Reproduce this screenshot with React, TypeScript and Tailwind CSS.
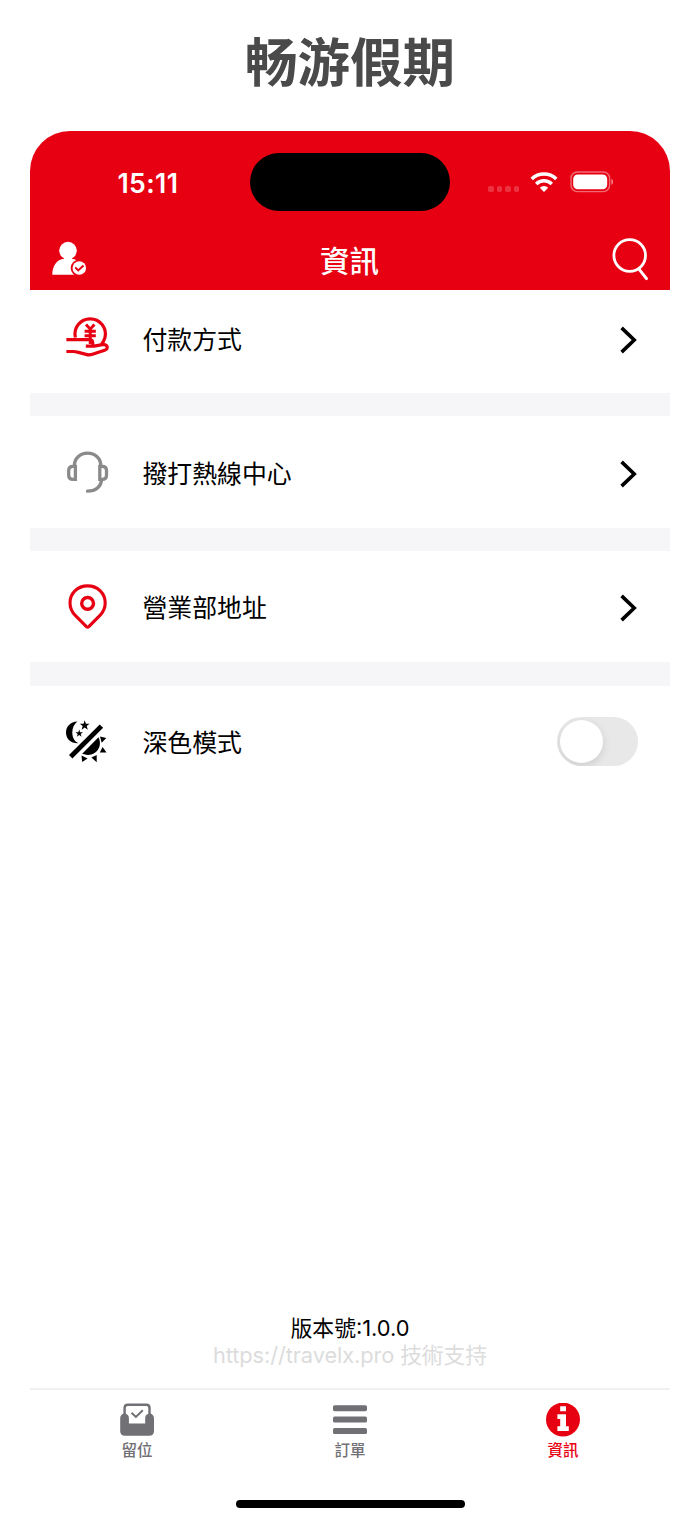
import React, { useState } from 'react';

interface MenuRowProps {
  icon: React.ReactNode;
  label: string;
  className?: string;
  children: React.ReactNode;
}

const PaymentIcon = () => (
  <svg viewBox="0 0 46 46" className="w-[46px] h-[46px]" fill="none" stroke="#e70012" strokeWidth="3.2">
    <path d="M11.4 22.5A15.2 15.2 0 1 1 41 22.4C40.3 25.3 39 27.6 37.4 29.6" />
    <path d="M2.4 24.7H25Q28.8 24.7 28.8 28.5V31.4" />
    <path d="M21.8 31.2H30L38.5 29.7C43.3 28.8 44.8 33.4 41.3 34.9L28.5 39.3Q25.3 40.4 22 39.4L13.5 37.1Q11.5 36.5 9 36.5H2.4" />
    <path d="M22 9.6L26.2 14.2L30.4 9.6M26.2 13.5V29M20.6 16.2H31.8M20.6 20.8H31.8" strokeWidth="2.9" />
  </svg>
);

const HeadsetIcon = () => (
  <svg viewBox="0 0 46 46" className="w-[46px] h-[46px]" fill="none" stroke="#8a8a8a" strokeWidth="3.3" strokeLinecap="round">
    <path d="M10.4 16.5C10.4 9.5 16 4.2 23.6 4.2C31.2 4.2 36.8 9.5 36.8 16.5" />
    <path d="M11.4 17.3H9Q4.7 17.3 4.7 21.5V26.3Q4.7 30.4 9 30.4H11.4Z" />
    <path d="M35.8 17.3H38.2Q42.5 17.3 42.5 21.5V26.3Q42.5 30.4 38.2 30.4H35.8Z" />
    <path d="M37.6 31.5C36.4 38 31.5 42 23.5 42.2" />
  </svg>
);

const PinIcon = () => (
  <svg viewBox="0 0 46 46" className="w-[46px] h-[46px]" fill="none" stroke="#e70012" strokeWidth="3.1" strokeLinejoin="round">
    <path d="M23.6 1.9C13.3 1.9 6 9.6 6 18.9C6 24.2 7.8 27.9 11.5 31.6L22.4 42.7Q23.6 43.8 24.8 42.7L35.7 31.6C39.4 27.9 41.2 24.2 41.2 18.9C41.2 9.6 33.9 1.9 23.6 1.9Z" />
    <circle cx="23.6" cy="19.4" r="5.9" strokeWidth="3.4" />
  </svg>
);

const DarkModeIcon = () => (
  <svg viewBox="0 0 46 46" className="w-[46px] h-[46px]" fill="#000">
    <path d="M13.4 2.6C6.3 3 2 7.8 2 13.5C2 20 6.8 24.4 14.2 24.2C10.4 22.4 8.3 18.6 8.3 13.6C8.3 9 10 5.2 13.4 2.6Z" />
    <path d="M20.7 1.3L21.9 4.8H25.6L22.7 7.1L23.8 10.8L20.7 8.6L17.6 10.8L18.7 7.1L15.8 4.8H19.5Z" />
    <path d="M15.2 10.5L16.1 13.2H19L16.7 14.9L17.6 17.8L15.2 16.1L12.8 17.8L13.7 14.9L11.4 13.2H14.3Z" />
    <path d="M37.4 7.1L6.7 37.8" stroke="#000" strokeWidth="4.8" />
    <path d="M34.5 18.3C39.5 28.5 30.5 39.5 18.2 34.8Z" />
    <path d="M36 17.6L42.3 18.9L37.7 23.8ZM38.6 28L42.5 33.4L35.8 33.4ZM27.4 38.6L32.7 36L32.7 43.3ZM17.5 36.4L23.6 39.5L18.2 43Z" />
  </svg>
);

const UserIcon = () => (
  <svg viewBox="0 0 36 36" className="w-[36px] h-[36px]">
    <circle cx="16" cy="9.6" r="8.8" fill="#fff" />
    <path d="M12 15H20V17.8C22 18 24 18.8 25.5 20L22.5 33.8H.3C.3 25 4.8 18.5 12 17.8Z" fill="#fff" />
    <circle cx="27.3" cy="27" r="8.6" fill="#e70012" />
    <circle cx="27.3" cy="27" r="6.8" fill="#fff" />
    <path d="M23.2 26.4L26.2 29.4L31.5 24.4" fill="none" stroke="#e70012" strokeWidth="2" />
  </svg>
);

const SearchIcon = () => (
  <svg viewBox="0 0 38 44" className="w-[38px] h-[44px]" fill="none" stroke="#fff" strokeLinecap="round">
    <circle cx="18.7" cy="18.5" r="15.8" strokeWidth="2.8" />
    <path d="M28.2 32.4L35.5 41.6" strokeWidth="3" />
  </svg>
);

const WifiIcon = () => (
  <svg viewBox="0 0 28 20" className="w-[28px] h-[20px]" fill="none" stroke="#fff" strokeWidth="3.5">
    <path d="M1.7 6.9A17.7 17.7 0 0 1 26.3 6.9" />
    <path d="M6.2 12A11.2 11.2 0 0 1 21.8 12" />
    <path d="M9.8 15.7A6 6 0 0 1 18.2 15.7L14 19.9Z" fill="#fff" stroke="none" />
  </svg>
);

const BatteryIcon = () => (
  <svg viewBox="0 0 44 22" className="w-[44px] h-[22px]">
    <rect x="1" y="1" width="38.6" height="19.6" rx="6.3" fill="none" stroke="#fff" strokeOpacity=".42" strokeWidth="1.4" />
    <rect x="3.2" y="3.4" width="34" height="14.8" rx="4.5" fill="#fff" />
    <path d="M41.3 7.8C43.7 8.6 43.7 13 41.3 13.8Z" fill="#fff" fillOpacity=".5" />
  </svg>
);

const ChevronIcon = () => (
  <svg viewBox="0 0 18 28" className="mt-[3px] w-[18px] h-[28px]" fill="none" stroke="#000" strokeWidth="3.6">
    <path d="M1.6 1.9L14.2 14L1.6 26.1" />
  </svg>
);

const BookingIcon = () => (
  <svg viewBox="0 0 34 34" className="w-[34px] h-[34px]">
    <path d="M4.6 14V5Q4.6 1.8 7.8 1.8H26.3Q29.5 1.8 29.5 5V14" fill="none" stroke="#707075" strokeWidth="2.4" />
    <path d="M4 10.6C6.8 10.6 8.9 12.2 8.9 14.8V20.4H25.2V14.8C25.2 12.2 27.3 10.6 30 10.6C32.5 11.1 34 12.9 34 15.3V28Q34 32.8 29.2 32.8H5Q.2 32.8 .2 28V15.3C.2 12.9 1.6 11.1 4 10.6Z" fill="#707075" />
    <path d="M11.5 9.7L15.9 13.9L22.8 7.2" fill="none" stroke="#707075" strokeWidth="2" />
  </svg>
);

const OrdersIcon = () => (
  <svg viewBox="0 0 34 34" className="w-[34px] h-[34px]" fill="#707075">
    <rect x="0" y="2.2" width="34" height="6" rx="1.6" />
    <rect x="0" y="13.6" width="34" height="6" rx="1.6" />
    <rect x="0" y="25" width="34" height="6" rx="1.6" />
  </svg>
);

const InfoIcon = () => (
  <svg viewBox="0 0 34 34" className="w-[34px] h-[34px]">
    <circle cx="17" cy="16.6" r="17" fill="#e70012" />
    <path d="M14.2 3.3H20V8.3H14.2ZM11.4 11.2H20V23.2H22.8V28.1H11.4V23.2H14.2V15.9H11.4Z" fill="#fff" />
  </svg>
);

const MenuRow: React.FC<MenuRowProps> = ({ icon, label, className = 'h-[111px]', children }) => (
  <div className={`flex items-center pl-[34px] pr-8 ${className}`}>
    {icon}
    <span className="ml-8 mt-[3px] flex-1 text-[24.9px] leading-[36px]">{label}</span>
    {children}
  </div>
);

const TABS = [
  { label: '留位', icon: <BookingIcon />, active: false },
  { label: '訂單', icon: <OrdersIcon />, active: false },
  { label: '資訊', icon: <InfoIcon />, active: true },
];

export default function App() {
  const [dark, setDark] = useState(false);

  return (
    <div className="w-[700px] h-[1521px] bg-white text-black flex flex-col overflow-hidden font-[Inter,'Noto_Sans_CJK_TC',sans-serif]">
      <h1 className="h-[130.5px] pb-3 flex-shrink-0 flex items-center justify-center text-[52.5px] leading-[76px] font-bold text-[#4a4a4a] font-['Noto_Sans_CJK_SC',sans-serif]">
        畅游假期
      </h1>

      <div className="mx-[30.4px] flex-1 flex flex-col">
        {/* Header */}
        <header className="h-[159.5px] bg-[#e70012] rounded-t-[40px] text-white">
          <div className="h-[103.5px] pl-[87px] pr-[56px] flex items-center">
            <span className="w-[132.6px] mt-0.5 text-[26.6px] leading-[32px] tracking-[0.4px] font-semibold">15:11</span>
            <div className="w-[200px] h-[58px] rounded-full bg-black" />
            <div className="ml-[38px] mt-[14px] flex gap-[3px]">
              {[0, 1, 2, 3].map(i => (
                <span key={i} className="w-[5.6px] h-[5.6px] rounded-[1.8px] bg-white/20" />
              ))}
            </div>
            <div className="ml-auto flex items-center gap-3">
              <WifiIcon />
              <BatteryIcon />
            </div>
          </div>
          <div className="h-[50px] pl-[22px] pr-[21px] flex items-center justify-between">
            <UserIcon />
            <span className="mt-1 text-[29.5px] leading-[44px] font-medium">資訊</span>
            <SearchIcon />
          </div>
        </header>

        {/* Menu */}
        <main className="flex-1">
          <MenuRow icon={<PaymentIcon />} label="付款方式" className="h-[103px] pb-[7px]">
            <ChevronIcon />
          </MenuRow>
          <div className="h-[23px] bg-[#f6f6f9]" />
          <MenuRow icon={<HeadsetIcon />} label="撥打熱線中心" className="h-[112px]">
            <ChevronIcon />
          </MenuRow>
          <div className="h-[23px] bg-[#f6f6f9]" />
          <MenuRow icon={<PinIcon />} label="營業部地址">
            <ChevronIcon />
          </MenuRow>
          <div className="h-[24px] bg-[#f6f6f9]" />
          <MenuRow icon={<DarkModeIcon />} label="深色模式">
            <button
              onClick={() => setDark(!dark)}
              className={`w-[81px] h-[49px] px-[3px] rounded-full flex items-center overflow-hidden ${dark ? 'bg-[#e70012] justify-end' : 'bg-[#e8e8e8]'}`}
            >
              <span className="w-[43px] h-[43px] rounded-full bg-white shadow-[0_3px_8px_rgba(0,0,0,0.12)]" />
            </button>
          </MenuRow>
        </main>

        {/* Version */}
        <div className="mb-[19px] text-center text-[21.8px] leading-[27px]">
          <p>版本號:1.0.0</p>
          <p className="text-[#dcdcdc] tracking-[-0.1px]">https://travelx.pro 技術支持</p>
        </div>

        {/* Tab bar */}
        <nav className="h-[133px] border-t-2 border-[#f0f0f0] flex flex-col items-center">
          <div className="w-full grid grid-cols-3">
            {TABS.map((tab, i) => (
              <div
                key={i}
                className={`pt-[13px] flex flex-col items-center text-[15.5px] leading-[22px] font-medium ${tab.active ? 'text-[#e70012]' : 'text-[#707075]'}`}
              >
                {tab.icon}
                <span className="mt-[3px]">{tab.label}</span>
              </div>
            ))}
          </div>
          <div className="mt-auto mb-[13px] w-[229px] h-2 rounded-full bg-black" />
        </nav>
      </div>
    </div>
  );
}
